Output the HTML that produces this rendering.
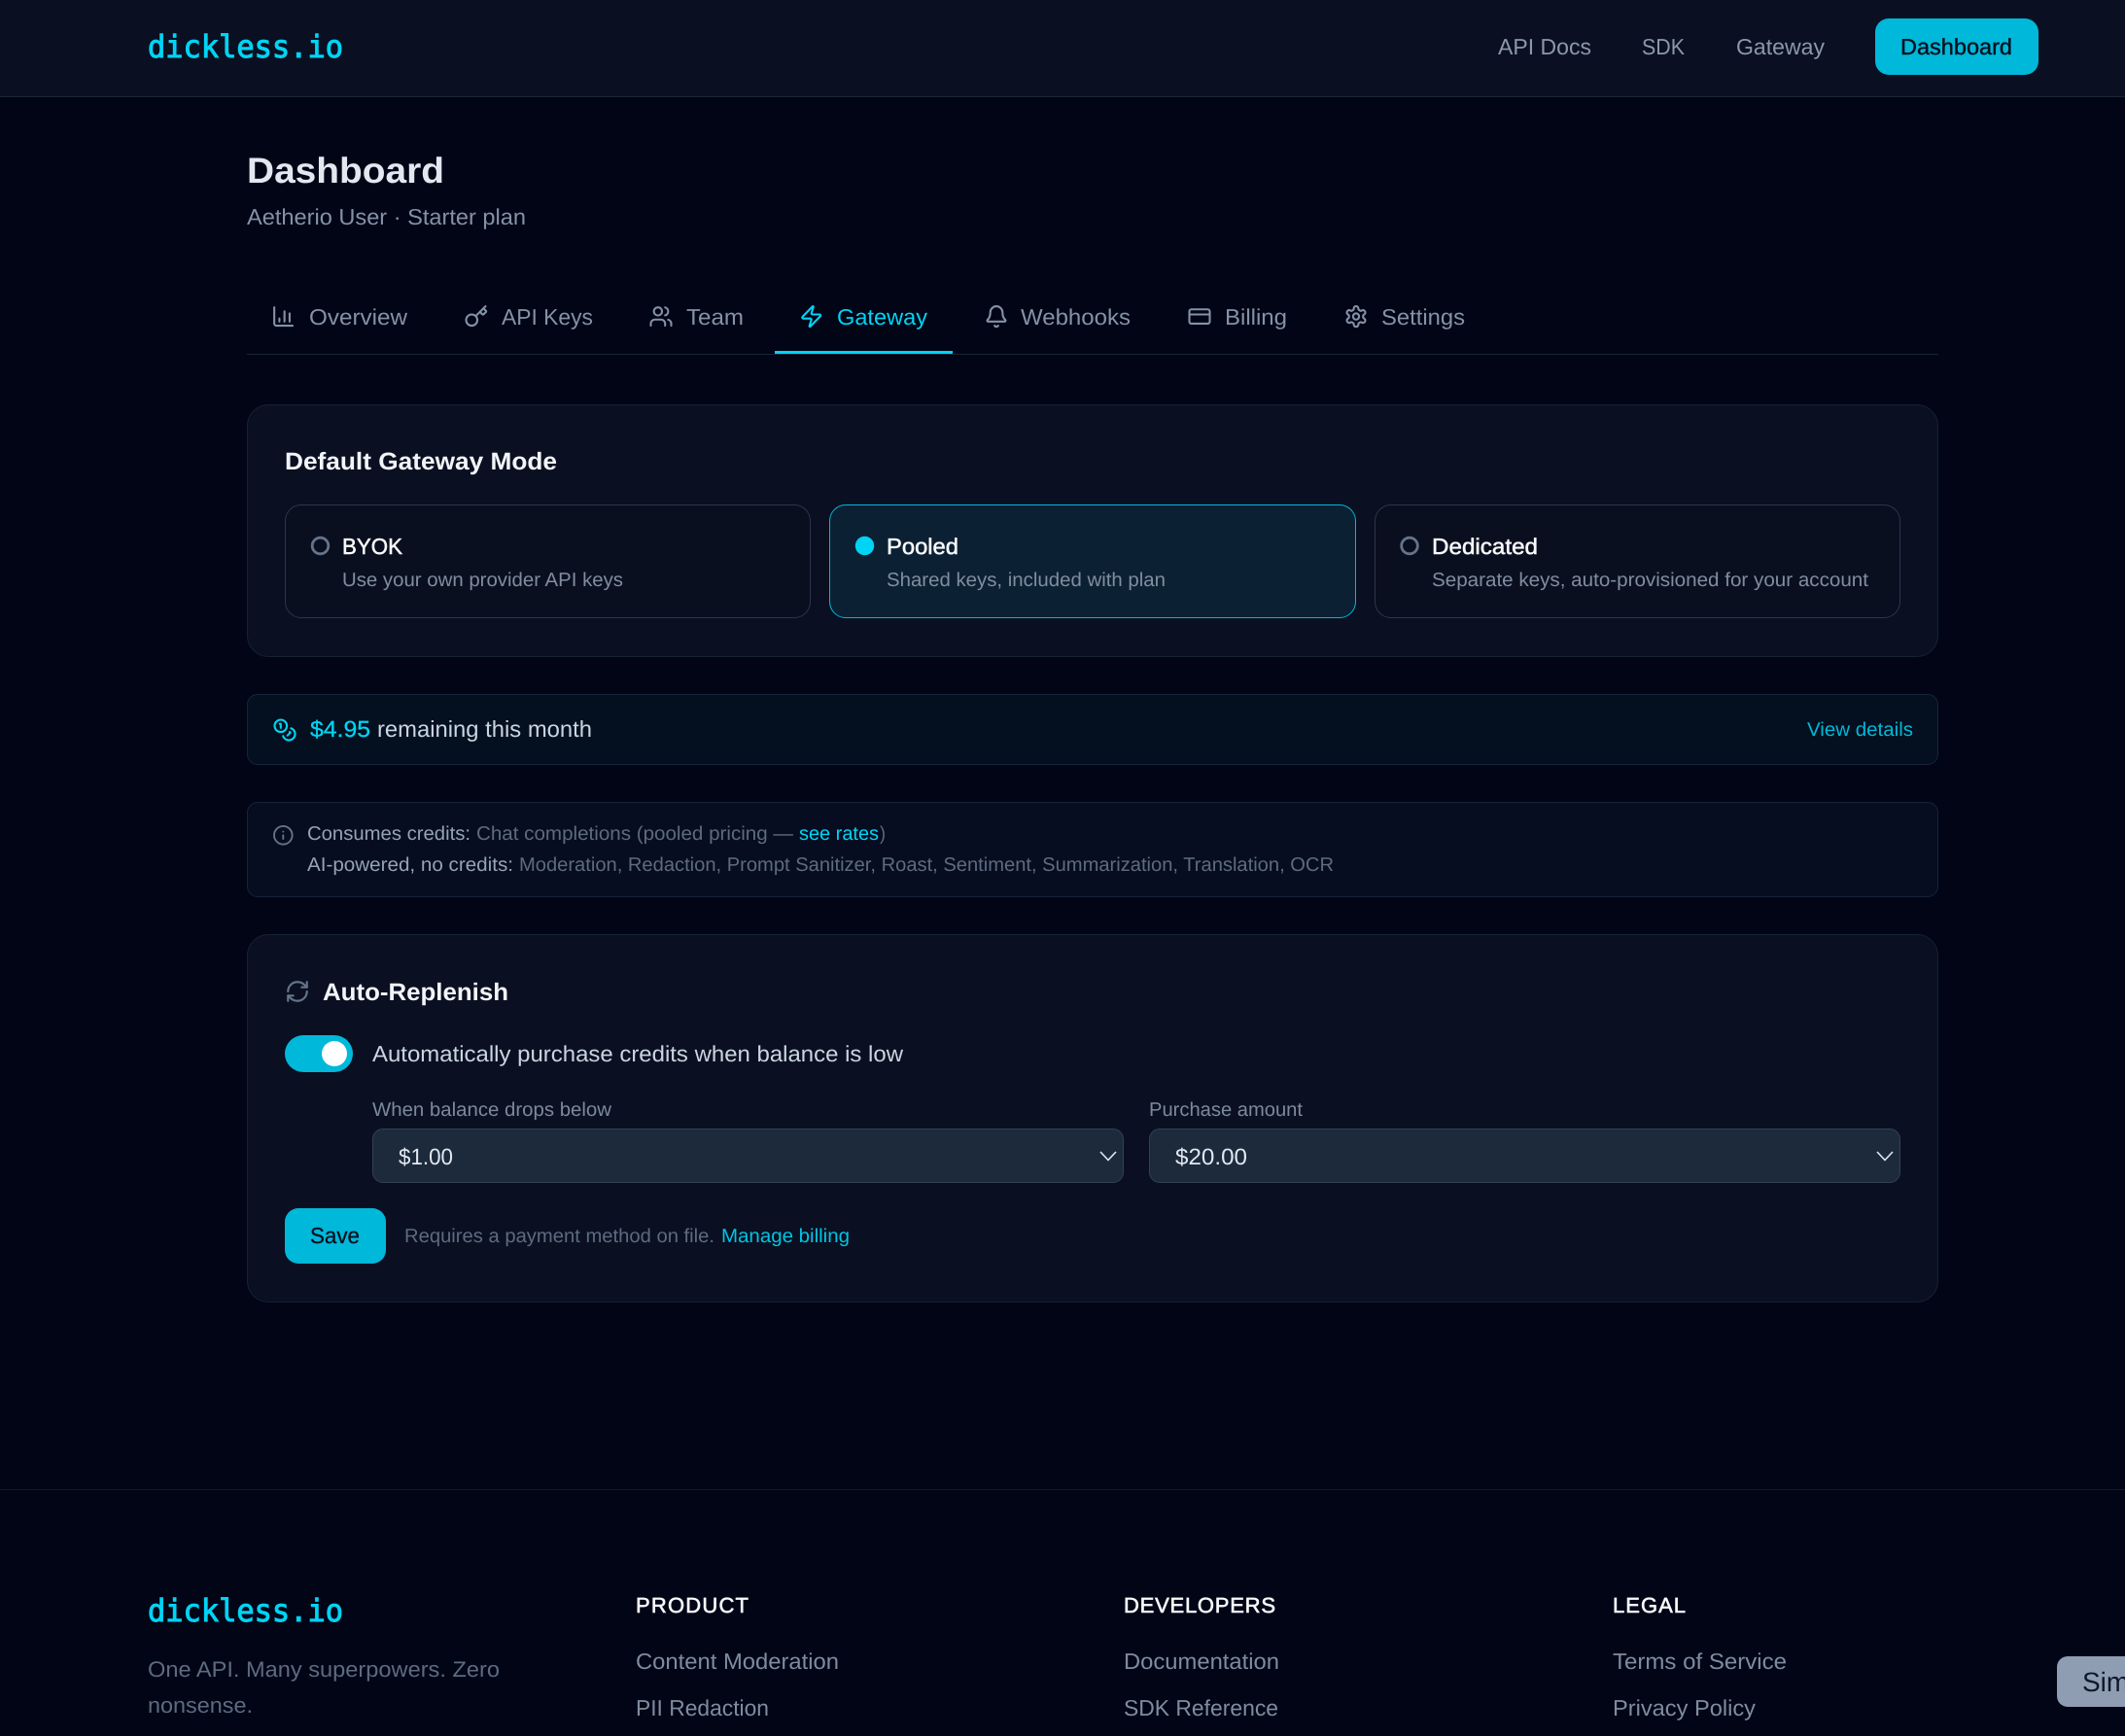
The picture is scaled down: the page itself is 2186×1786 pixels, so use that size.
<!DOCTYPE html>
<html lang="en">
<head>
<meta charset="utf-8">
<title>Dashboard</title>
<style>
html,body{margin:0;padding:0;background:#010516;}
body{position:relative;width:2186px;height:1786px;overflow:hidden;font-family:"Liberation Sans",sans-serif;}
.b{position:absolute;box-sizing:border-box;}
svg.o{position:absolute;left:0;top:0;width:2186px;height:1786px;}
text{font-family:"Liberation Sans",sans-serif;text-rendering:geometricPrecision;}
text.mono{font-family:"DejaVu Sans Mono",monospace;}
.ic{fill:none;stroke-linecap:round;stroke-linejoin:round;stroke-width:2;}
</style>
</head>
<body>
<div class="b" style="left:0;top:0;width:2186px;height:100px;background:#0a1021;border-bottom:1px solid #1a2536;"></div>
<div class="b" style="left:1929px;top:19px;width:168px;height:58px;background:#00b8d9;border-radius:14px;"></div>
<div class="b" style="left:254px;top:364px;width:1740px;height:1px;background:#1a2536;"></div>
<div class="b" style="left:797px;top:361px;width:183px;height:3px;background:#00d4f5;"></div>

<div class="b" style="left:254px;top:416px;width:1740px;height:260px;background:#0a1021;border:1px solid #162133;border-radius:22px;"></div>
<div class="b" style="left:293px;top:519px;width:541px;height:117px;background:#0a0f1f;border:1px solid #2a3749;border-radius:17px;"></div>
<div class="b" style="left:853px;top:519px;width:542px;height:117px;background:#0c2033;border:1px solid #00b8d9;border-radius:17px;"></div>
<div class="b" style="left:1414px;top:519px;width:541px;height:117px;background:#0a0f1f;border:1px solid #2a3749;border-radius:17px;"></div>

<div class="b" style="left:254px;top:714px;width:1740px;height:73px;background:#04101f;border:1px solid #16253a;border-radius:11px;"></div>
<div class="b" style="left:254px;top:825px;width:1740px;height:98px;background:#070d20;border:1px solid #16233a;border-radius:11px;"></div>

<div class="b" style="left:254px;top:961px;width:1740px;height:379px;background:#0a1021;border:1px solid #162133;border-radius:22px;"></div>
<div class="b" style="left:293px;top:1065px;width:70px;height:38px;background:#00b8d9;border-radius:19px;"></div>
<div class="b" style="left:331px;top:1071px;width:26px;height:26px;background:#fff;border-radius:50%;"></div>
<div class="b" style="left:383px;top:1161px;width:773px;height:56px;background:#1c2a3c;border:1px solid #334155;border-radius:11px;"></div>
<div class="b" style="left:1182px;top:1161px;width:773px;height:56px;background:#1c2a3c;border:1px solid #334155;border-radius:11px;"></div>
<div class="b" style="left:293px;top:1243px;width:104px;height:57px;background:#00b8d9;border-radius:14px;"></div>

<div class="b" style="left:0;top:1532px;width:2186px;height:1px;background:#0f1c2e;"></div>
<div class="b" style="left:2116px;top:1704px;width:90px;height:52px;background:#8f9db2;border-radius:11px;"></div>

<svg class="o" xmlns="http://www.w3.org/2000/svg" viewBox="0 0 2186 1786">
  <!-- Logos -->
  <g fill="#00d4f5" stroke="#00d4f5" stroke-width="1" font-size="32">
    <text class="mono" x="152" y="59" textLength="201" lengthAdjust="spacingAndGlyphs">dickless.io</text>
    <text class="mono" x="152" y="1668" textLength="201" lengthAdjust="spacingAndGlyphs">dickless.io</text>
  </g>

  <!-- Top nav -->
  <g fill="#8b98ab" font-size="23">
    <text x="1541" y="56" textLength="96" lengthAdjust="spacingAndGlyphs">API Docs</text>
    <text x="1689" y="56" textLength="44" lengthAdjust="spacingAndGlyphs">SDK</text>
    <text x="1786" y="56" textLength="91" lengthAdjust="spacingAndGlyphs">Gateway</text>
  </g>
  <text x="1955" y="56" font-size="23" fill="#07101f" stroke="#07101f" stroke-width=".4" textLength="115" lengthAdjust="spacingAndGlyphs">Dashboard</text>

  <!-- Heading -->
  <text x="254" y="188" font-size="37" font-weight="700" fill="#e2e8f0" textLength="203" lengthAdjust="spacingAndGlyphs">Dashboard</text>
  <text x="254" y="231" font-size="23" fill="#8592a6" textLength="287" lengthAdjust="spacingAndGlyphs">Aetherio User · Starter plan</text>

  <!-- Tabs -->
  <g fill="#8592a6" font-size="23">
    <text x="318" y="334" textLength="101" lengthAdjust="spacingAndGlyphs">Overview</text>
    <text x="516" y="334" textLength="94" lengthAdjust="spacingAndGlyphs">API Keys</text>
    <text x="706" y="334" textLength="59" lengthAdjust="spacingAndGlyphs">Team</text>
    <text x="1050" y="334" textLength="113" lengthAdjust="spacingAndGlyphs">Webhooks</text>
    <text x="1260" y="334" textLength="64" lengthAdjust="spacingAndGlyphs">Billing</text>
    <text x="1421" y="334" textLength="86" lengthAdjust="spacingAndGlyphs">Settings</text>
  </g>
  <text x="861" y="334" font-size="23" fill="#00d4f5" textLength="93" lengthAdjust="spacingAndGlyphs">Gateway</text>

  <!-- Tab icons -->
  <g class="ic" stroke="#8592a6">
    <svg x="279" y="313" width="25.2" height="25.2" viewBox="0 0 24 24"><path d="M3 3v16a2 2 0 0 0 2 2h16"/><path d="M8 17v-3"/><path d="M13 17V7"/><path d="M18 17v-8"/></svg>
    <svg x="477.400" y="313" width="25.2" height="25.2" viewBox="0 0 24 24"><path d="m15.5 7.5 2.3 2.3a1 1 0 0 0 1.4 0l2.1-2.1a1 1 0 0 0 0-1.4L19 4"/><path d="m21 2-9.6 9.6"/><circle cx="7.5" cy="15.5" r="5.5"/></svg>
    <svg x="667.400" y="313" width="25.2" height="25.2" viewBox="0 0 24 24"><path d="M16 21v-2a4 4 0 0 0-4-4H6a4 4 0 0 0-4 4v2"/><circle cx="9" cy="7" r="4"/><path d="M22 21v-2a4 4 0 0 0-3-3.87"/><path d="M16 3.13a4 4 0 0 1 0 7.75"/></svg>
    <svg x="1012.400" y="313" width="25.2" height="25.2" viewBox="0 0 24 24"><path d="M10.268 21a2 2 0 0 0 3.464 0"/><path d="M3.262 15.326A1 1 0 0 0 4 17h16a1 1 0 0 0 .74-1.673C19.41 13.956 18 12.499 18 8A6 6 0 0 0 6 8c0 4.499-1.411 5.956-2.738 7.326"/></svg>
    <svg x="1221.400" y="313" width="25.2" height="25.2" viewBox="0 0 24 24"><rect x="2" y="5" width="20" height="14" rx="2"/><path d="M2 10h20"/></svg>
    <svg x="1382.400" y="313" width="25.2" height="25.2" viewBox="0 0 24 24"><path d="M12.22 2h-.44a2 2 0 0 0-2 2v.18a2 2 0 0 1-1 1.73l-.43.25a2 2 0 0 1-2 0l-.15-.08a2 2 0 0 0-2.73.73l-.22.38a2 2 0 0 0 .73 2.73l.15.1a2 2 0 0 1 1 1.72v.51a2 2 0 0 1-1 1.74l-.15.09a2 2 0 0 0-.73 2.73l.22.38a2 2 0 0 0 2.73.73l.15-.08a2 2 0 0 1 2 0l.43.25a2 2 0 0 1 1 1.73V20a2 2 0 0 0 2 2h.44a2 2 0 0 0 2-2v-.18a2 2 0 0 1 1-1.73l.43-.25a2 2 0 0 1 2 0l.15.08a2 2 0 0 0 2.73-.73l.22-.39a2 2 0 0 0-.73-2.73l-.15-.08a2 2 0 0 1-1-1.74v-.5a2 2 0 0 1 1-1.74l.15-.09a2 2 0 0 0 .73-2.73l-.22-.38a2 2 0 0 0-2.73-.73l-.15.08a2 2 0 0 1-2 0l-.43-.25a2 2 0 0 1-1-1.73V4a2 2 0 0 0-2-2z"/><circle cx="12" cy="12" r="3"/></svg>
  </g>
  <g class="ic" stroke="#00d4f5">
    <svg x="822.100" y="313" width="25.2" height="25.2" viewBox="0 0 24 24"><path d="M4 14a1 1 0 0 1-.78-1.63l9.9-10.2a.5.5 0 0 1 .86.46l-1.92 6.02A1 1 0 0 0 13 10h7a1 1 0 0 1 .78 1.63l-9.9 10.2a.5.5 0 0 1-.86-.46l1.92-6.02A1 1 0 0 0 11 14z"/></svg>
  </g>

  <!-- Gateway mode -->
  <text x="293" y="483" font-size="25" font-weight="700" fill="#f1f5f9" textLength="280" lengthAdjust="spacingAndGlyphs">Default Gateway Mode</text>
  <circle cx="329.5" cy="561.5" r="8.3" fill="none" stroke="#64748b" stroke-width="2.8"/>
  <circle cx="889.5" cy="561.5" r="9.7" fill="#00d4f5"/>
  <circle cx="1450" cy="561.5" r="8.3" fill="none" stroke="#64748b" stroke-width="2.8"/>
  <g fill="#f8fafc" stroke="#f8fafc" stroke-width=".5" font-size="23">
    <text x="352" y="570" textLength="62" lengthAdjust="spacingAndGlyphs">BYOK</text>
    <text x="912" y="570" textLength="74" lengthAdjust="spacingAndGlyphs">Pooled</text>
    <text x="1473" y="570" textLength="109" lengthAdjust="spacingAndGlyphs">Dedicated</text>
  </g>
  <g fill="#808da0" font-size="20">
    <text x="352" y="603" textLength="289" lengthAdjust="spacingAndGlyphs">Use your own provider API keys</text>
    <text x="912" y="603" textLength="287" lengthAdjust="spacingAndGlyphs">Shared keys, included with plan</text>
    <text x="1473" y="603" textLength="449" lengthAdjust="spacingAndGlyphs">Separate keys, auto-provisioned for your account</text>
  </g>

  <!-- Credit bar -->
  <g class="ic" stroke="#00d4f5">
    <svg x="280.400" y="738.400" width="25.2" height="25.2" viewBox="0 0 24 24"><circle cx="8" cy="8" r="6"/><path d="M18.09 10.37A6 6 0 1 1 10.34 18"/><path d="M7 6h1v4"/><path d="m16.71 13.88.7.71-2.82 2.82"/></svg>
  </g>
  <text x="319" y="758" font-size="23.5" fill="#00d4f5" stroke="#00d4f5" stroke-width=".3" textLength="62" lengthAdjust="spacingAndGlyphs">$4.95</text>
  <text x="388" y="758" font-size="23.5" fill="#cbd5e1" textLength="221" lengthAdjust="spacingAndGlyphs">remaining this month</text>
  <text x="1859" y="757" font-size="20" fill="#00b8d9" textLength="109" lengthAdjust="spacingAndGlyphs">View details</text>

  <!-- Info box -->
  <g class="ic" stroke="#64748b">
    <svg x="280.100" y="848.100" width="22.400" height="22.400" viewBox="0 0 24 24"><circle cx="12" cy="12" r="10"/><path d="M12 16v-4"/><path d="M12 8h.01"/></svg>
  </g>
  <g font-size="20">
    <text x="316" y="864" fill="#94a3b8" textLength="168" lengthAdjust="spacingAndGlyphs">Consumes credits:</text>
    <text x="490" y="864" fill="#5d6b80" textLength="326" lengthAdjust="spacingAndGlyphs">Chat completions (pooled pricing —</text>
    <text x="822" y="864" fill="#00d4f5" textLength="82" lengthAdjust="spacingAndGlyphs">see rates</text>
    <text x="905" y="864" fill="#5d6b80" textLength="6" lengthAdjust="spacingAndGlyphs">)</text>
    <text x="316" y="896" fill="#94a3b8" textLength="212" lengthAdjust="spacingAndGlyphs">AI-powered, no credits:</text>
    <text x="534" y="896" fill="#5d6b80" textLength="838" lengthAdjust="spacingAndGlyphs">Moderation, Redaction, Prompt Sanitizer, Roast, Sentiment, Summarization, Translation, OCR</text>
  </g>

  <!-- Auto-Replenish -->
  <g class="ic" stroke="#64748b">
    <svg x="293" y="1007" width="26" height="26" viewBox="0 0 24 24"><path d="M3 12a9 9 0 0 1 9-9 9.75 9.75 0 0 1 6.74 2.74L21 8"/><path d="M21 3v5h-5"/><path d="M21 12a9 9 0 0 1-9 9 9.75 9.75 0 0 1-6.74-2.74L3 16"/><path d="M8 16H3v5"/></svg>
  </g>
  <text x="332" y="1029" font-size="25" font-weight="700" fill="#f1f5f9" textLength="191" lengthAdjust="spacingAndGlyphs">Auto-Replenish</text>
  <text x="383" y="1092" font-size="23" fill="#cbd5e1" textLength="546" lengthAdjust="spacingAndGlyphs">Automatically purchase credits when balance is low</text>
  <g fill="#7c899c" font-size="20">
    <text x="383" y="1148" textLength="246" lengthAdjust="spacingAndGlyphs">When balance drops below</text>
    <text x="1182" y="1148" textLength="158" lengthAdjust="spacingAndGlyphs">Purchase amount</text>
  </g>
  <g fill="#e2e8f0" font-size="23.500">
    <text x="410" y="1198" textLength="56" lengthAdjust="spacingAndGlyphs">$1.00</text>
    <text x="1209" y="1198" textLength="74" lengthAdjust="spacingAndGlyphs">$20.00</text>
  </g>
  <g fill="none" stroke="#e2e8f0" stroke-width="1.600">
    <path d="M1132 1185l8 8.500 8-8.500"/>
    <path d="M1931 1185l8 8.500 8-8.500"/>
  </g>
  <text x="319" y="1279" font-size="23" fill="#07101f" stroke="#07101f" stroke-width=".3" textLength="51" lengthAdjust="spacingAndGlyphs">Save</text>
  <text x="416" y="1278" font-size="20" fill="#5d6b80" textLength="319" lengthAdjust="spacingAndGlyphs">Requires a payment method on file.</text>
  <text x="742" y="1278" font-size="20" fill="#00c4e4" textLength="132" lengthAdjust="spacingAndGlyphs">Manage billing</text>

  <!-- Footer -->
  <g fill="#5d6b80" font-size="22.500">
    <text x="152" y="1725" textLength="362" lengthAdjust="spacingAndGlyphs">One API. Many superpowers. Zero</text>
    <text x="152" y="1762" textLength="108" lengthAdjust="spacingAndGlyphs">nonsense.</text>
  </g>
  <g fill="#f8fafc" stroke="#f8fafc" stroke-width=".6" font-size="22">
    <text x="654" y="1659" textLength="116" lengthAdjust="spacing">PRODUCT</text>
    <text x="1156" y="1659" textLength="156" lengthAdjust="spacing">DEVELOPERS</text>
    <text x="1659" y="1659" textLength="75" lengthAdjust="spacing">LEGAL</text>
  </g>
  <g fill="#7f8ca0" font-size="23">
    <text x="654" y="1717" textLength="209" lengthAdjust="spacingAndGlyphs">Content Moderation</text>
    <text x="654" y="1765" textLength="137" lengthAdjust="spacingAndGlyphs">PII Redaction</text>
    <text x="1156" y="1717" textLength="160" lengthAdjust="spacingAndGlyphs">Documentation</text>
    <text x="1156" y="1765" textLength="159" lengthAdjust="spacingAndGlyphs">SDK Reference</text>
    <text x="1659" y="1717" textLength="179" lengthAdjust="spacingAndGlyphs">Terms of Service</text>
    <text x="1659" y="1765" textLength="147" lengthAdjust="spacingAndGlyphs">Privacy Policy</text>
  </g>
  <text x="2142" y="1740" font-size="28" fill="#0f172a">Simulate</text>
</svg>
</body>
</html>
